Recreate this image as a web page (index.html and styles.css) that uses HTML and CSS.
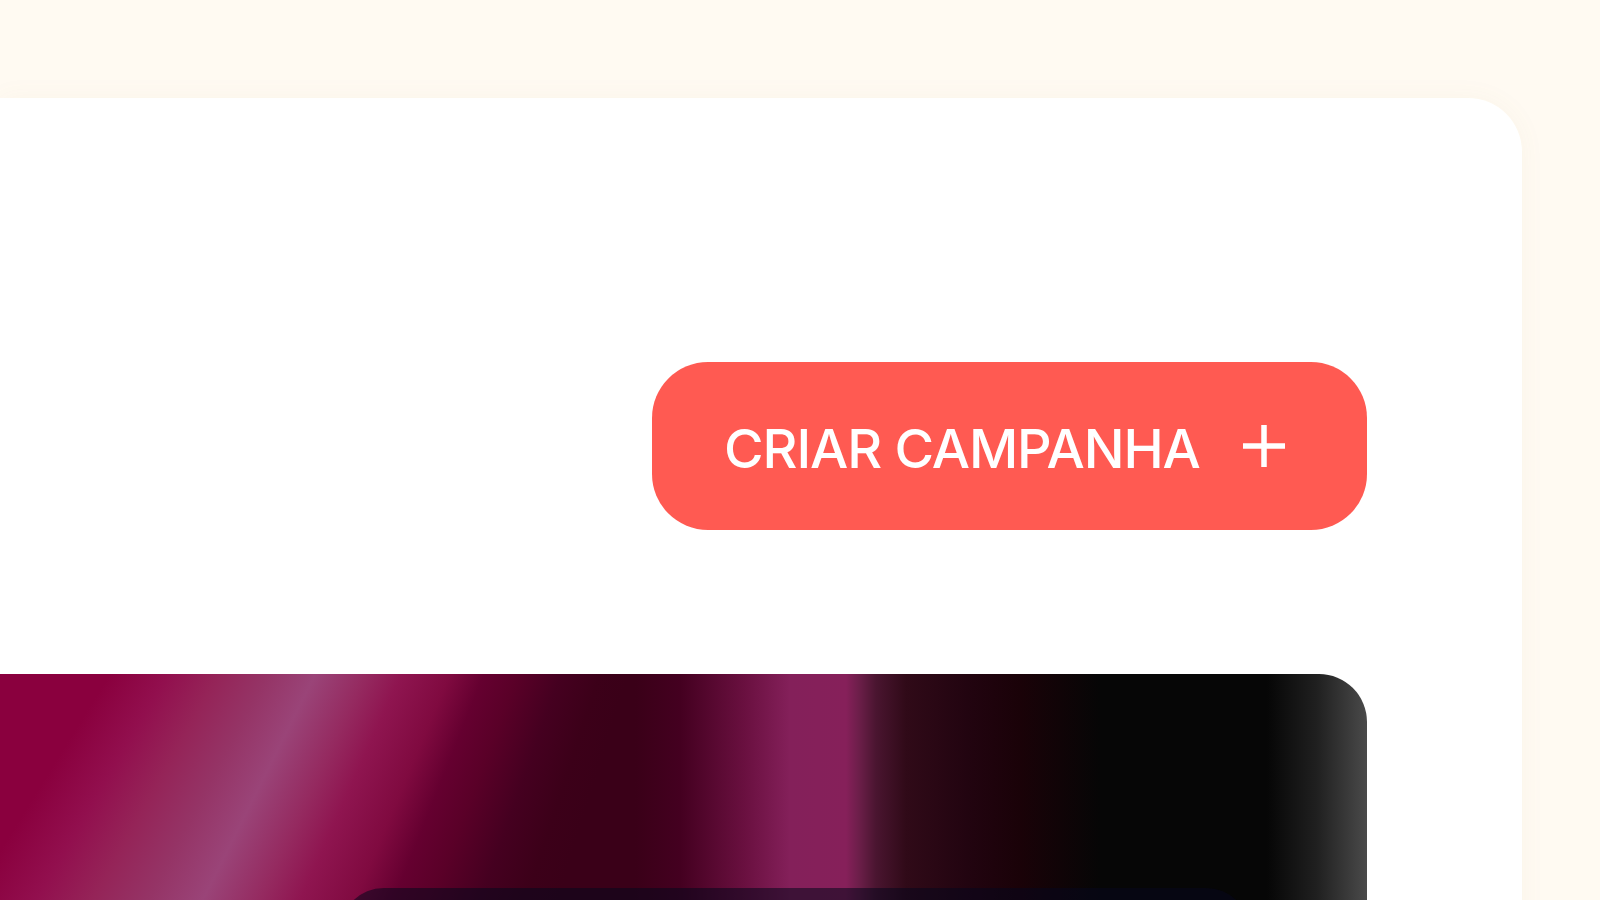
FILE: index.html
```html
<!DOCTYPE html>
<html lang="pt-BR">
<head>
<meta charset="utf-8">
<title>Campanhas</title>
<link rel="stylesheet" href="styles.css">
</head>
<body>
<div class="page">
  <main class="card">
    <div class="toolbar">
      <button class="btn-create" type="button">
        <span class="btn-label">CRIAR CAMPANHA</span>
        <svg class="btn-icon" width="44" height="44" viewBox="0 0 44 44" aria-hidden="true">
          <path d="M22 1V43M1 22H43" stroke="#ffffff" stroke-width="5.5" fill="none"/>
        </svg>
      </button>
    </div>
    <section class="hero">
      <div class="hero-panel"></div>
    </section>
  </main>
</div>
</body>
</html>
```
FILE: styles.css
```css
html, body {
  margin: 0;
  height: 100%;
  overflow: hidden;
}

body {
  background: #fffaf2;
  font-family: Inter, "Liberation Sans", sans-serif;
}

.page {
  height: 100vh;
  box-sizing: border-box;
  padding: 98px 78px 0 0;
}

.card {
  background: #ffffff;
  border-top-right-radius: 54px;
  min-height: 900px;
  box-sizing: border-box;
  padding: 264px 155px 0 0;
  box-shadow: 0 0 26px rgba(160, 130, 70, 0.05);
  display: flex;
  flex-direction: column;
}

.toolbar {
  display: flex;
  justify-content: flex-end;
}

.btn-create {
  width: 715px;
  height: 168px;
  box-sizing: border-box;
  border: 0;
  border-radius: 56px;
  background: #ff5a52;
  color: #ffffff;
  display: flex;
  align-items: center;
  justify-content: space-between;
  padding: 0 81px 0 72px;
  font-family: Inter, "Liberation Sans", sans-serif;
  font-weight: 500;
  font-size: 54px;
  letter-spacing: -1.1px;
  cursor: pointer;
}

.btn-label {
  margin-top: 5px;
  white-space: nowrap;
}

.btn-icon {
  flex: none;
  display: block;
}

.hero {
  margin-top: 144px;
  height: 400px;
  box-sizing: border-box;
  padding-top: 214px;
  border-top-right-radius: 48px;
  background:
    linear-gradient(to left, #4a4a4a 0, rgba(34, 34, 34, 0.92) 50px, rgba(8, 8, 8, 0) 100px),
    linear-gradient(90deg,
      rgba(58, 0, 24, 0) 0,
      rgba(58, 0, 24, 0) 595px,
      #3a0018 635px,
      #440020 680px,
      #6a1040 745px,
      #84205a 790px,
      #86205a 846px,
      #6a1e48 860px,
      #4a1530 876px,
      #300a18 906px,
      #220410 967px,
      #1a0208 1020px,
      #060606 1100px,
      #060606 100%),
    conic-gradient(from 0deg at 1150px -1674px,
      #3a0018 170deg,
      #3a0018 197.3deg,
      #3c0019 198.2deg,
      #450020 199.4deg,
      #5a0028 200.7deg,
      #650030 201.7deg,
      #800a40 202.7deg,
      #8f1550 204.1deg,
      #952a60 205.1deg,
      #9a4478 206.5deg,
      #953466 207.8deg,
      #952458 209.1deg,
      #920f4e 210.4deg,
      #8a003e 211.85deg,
      #8a003e 216deg);
}

.hero-panel {
  margin-left: 340px;
  width: 910px;
  height: 150px;
  border-radius: 44px;
  background: rgba(8, 8, 28, 0.56);
}
```
